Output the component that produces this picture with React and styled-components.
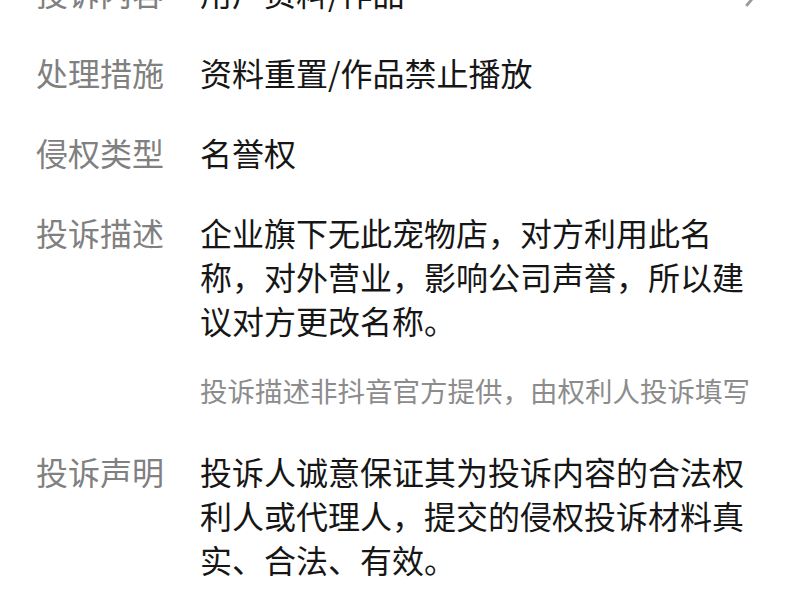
import React from "react";
import styled, { createGlobalStyle } from "styled-components";

const GlobalStyle = createGlobalStyle`
  html, body {
    margin: 0;
    padding: 0;
    background: #ffffff;
    overflow: hidden;
  }
  body {
    font-family: "Noto Sans CJK SC", "Noto Sans", sans-serif;
  }
`;

const StyledPage = styled.section`
  width: 800px;
  height: 600px;
  overflow: hidden;
  background: #ffffff;
`;

const StyledList = styled.div`
  display: flex;
  flex-direction: column;
  margin-top: -48px;
  padding: 0 36px;
`;

const StyledRow = styled.div`
  position: relative;
  display: flex;
  align-items: flex-start;
  padding: 18px 0;
`;

const StyledLabel = styled.div`
  flex: 0 0 164px;
  font-size: 32px;
  line-height: 44px;
  color: #808080;
  white-space: nowrap;
`;

const StyledValue = styled.div`
  flex: 1;
  display: flex;
  flex-direction: column;
  font-size: 32px;
  line-height: 44px;
  color: #161616;
  white-space: nowrap;
`;

const StyledNote = styled.div`
  margin-top: 30px;
  margin-bottom: 5px;
  font-size: 27.5px;
  line-height: 36px;
  color: #8c8c8c;
  white-space: nowrap;
`;

const StyledChevron = styled.span`
  position: absolute;
  right: 0;
  top: 50%;
  transform: translateY(-50%);
  display: flex;
  color: #9a9a9a;
`;

const Chevron = () => (
  <StyledChevron>
    <svg width="26" height="32" viewBox="0 0 26 32" fill="none">
      <path d="M9 3l11 13-11 13" stroke="currentColor" strokeWidth="2.8" strokeLinecap="round" strokeLinejoin="round" />
    </svg>
  </StyledChevron>
);

const rows = [
  { label: "投诉内容", lines: ["用户资料/作品"], arrow: true },
  { label: "处理措施", lines: ["资料重置/作品禁止播放"] },
  { label: "侵权类型", lines: ["名誉权"] },
  {
    label: "投诉描述",
    lines: ["企业旗下无此宠物店，对方利用此名", "称，对外营业，影响公司声誉，所以建", "议对方更改名称。"],
    note: "投诉描述非抖音官方提供，由权利人投诉填写",
  },
  {
    label: "投诉声明",
    lines: ["投诉人诚意保证其为投诉内容的合法权", "利人或代理人，提交的侵权投诉材料真", "实、合法、有效。"],
  },
];

const App = () => {
  return (
    <StyledPage>
      <GlobalStyle />
      <StyledList>
        {rows.map((row) => (
          <StyledRow key={row.label}>
            <StyledLabel>{row.label}</StyledLabel>
            <StyledValue>
              {row.lines.map((line) => (
                <span key={line}>{line}</span>
              ))}
              {row.note && <StyledNote>{row.note}</StyledNote>}
            </StyledValue>
            {row.arrow && <Chevron />}
          </StyledRow>
        ))}
      </StyledList>
    </StyledPage>
  );
};

export default App;
